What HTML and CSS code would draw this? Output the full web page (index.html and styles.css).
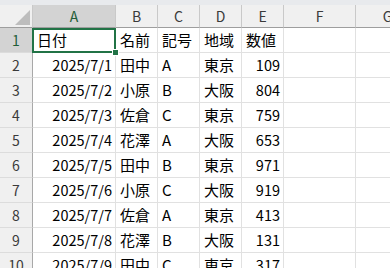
FILE: index.html
```html
<!DOCTYPE html>
<html lang="ja">
<head>
  <meta charset="UTF-8">
  <title>Sheet1</title>
  <link rel="stylesheet" href="styles.css">
</head>
<body>
  <div class="top-strip"></div>
  <div class="sheet">
    <div class="row head-row">
      <div class="corner"><span class="corner-mark"></span></div>
      <div class="col-head selected">A</div>
      <div class="col-head">B</div>
      <div class="col-head">C</div>
      <div class="col-head">D</div>
      <div class="col-head">E</div>
      <div class="col-head">F</div>
      <div class="col-head">G</div>
    </div>

    <div class="row">
      <div class="row-head selected">1</div>
      <div class="cell active">日付<span class="selection"><span class="fill-handle"></span></span></div>
      <div class="cell">名前</div>
      <div class="cell">記号</div>
      <div class="cell">地域</div>
      <div class="cell">数値</div>
      <div class="cell"></div>
      <div class="cell"></div>
    </div>
    <div class="row">
      <div class="row-head">2</div>
      <div class="cell num">2025/7/1</div>
      <div class="cell">田中</div>
      <div class="cell">A</div>
      <div class="cell">東京</div>
      <div class="cell num">109</div>
      <div class="cell"></div>
      <div class="cell"></div>
    </div>
    <div class="row">
      <div class="row-head">3</div>
      <div class="cell num">2025/7/2</div>
      <div class="cell">小原</div>
      <div class="cell">B</div>
      <div class="cell">大阪</div>
      <div class="cell num">804</div>
      <div class="cell"></div>
      <div class="cell"></div>
    </div>
    <div class="row">
      <div class="row-head">4</div>
      <div class="cell num">2025/7/3</div>
      <div class="cell">佐倉</div>
      <div class="cell">C</div>
      <div class="cell">東京</div>
      <div class="cell num">759</div>
      <div class="cell"></div>
      <div class="cell"></div>
    </div>
    <div class="row">
      <div class="row-head">5</div>
      <div class="cell num">2025/7/4</div>
      <div class="cell">花澤</div>
      <div class="cell">A</div>
      <div class="cell">大阪</div>
      <div class="cell num">653</div>
      <div class="cell"></div>
      <div class="cell"></div>
    </div>
    <div class="row">
      <div class="row-head">6</div>
      <div class="cell num">2025/7/5</div>
      <div class="cell">田中</div>
      <div class="cell">B</div>
      <div class="cell">東京</div>
      <div class="cell num">971</div>
      <div class="cell"></div>
      <div class="cell"></div>
    </div>
    <div class="row">
      <div class="row-head">7</div>
      <div class="cell num">2025/7/6</div>
      <div class="cell">小原</div>
      <div class="cell">C</div>
      <div class="cell">大阪</div>
      <div class="cell num">919</div>
      <div class="cell"></div>
      <div class="cell"></div>
    </div>
    <div class="row">
      <div class="row-head">8</div>
      <div class="cell num">2025/7/7</div>
      <div class="cell">佐倉</div>
      <div class="cell">A</div>
      <div class="cell">東京</div>
      <div class="cell num">413</div>
      <div class="cell"></div>
      <div class="cell"></div>
    </div>
    <div class="row">
      <div class="row-head">9</div>
      <div class="cell num">2025/7/8</div>
      <div class="cell">花澤</div>
      <div class="cell">B</div>
      <div class="cell">大阪</div>
      <div class="cell num">131</div>
      <div class="cell"></div>
      <div class="cell"></div>
    </div>
    <div class="row">
      <div class="row-head">10</div>
      <div class="cell num">2025/7/9</div>
      <div class="cell">田中</div>
      <div class="cell">C</div>
      <div class="cell">東京</div>
      <div class="cell num">317</div>
      <div class="cell"></div>
      <div class="cell"></div>
    </div>
  </div>
</body>
</html>
```

FILE: styles.css
```css
body {
  margin: 0;
  background-color: #ffffff;
  font-family: "Noto Sans CJK JP", "Noto Sans", sans-serif;
  overflow: hidden;
}

.top-strip {
  height: 5px;
  background-color: #e8eaed;
}

.sheet {
  width: 420px;
}

.row {
  display: grid;
  grid-template-columns: 33px 83px 42px 42px 42px 42px 72px 64px;
  height: 25px;
}

.row > div {
  box-sizing: border-box;
  border-right: 1px solid #e1e1e1;
  border-bottom: 1px solid #e1e1e1;
}

.head-row {
  height: 23px;
}

.head-row > div {
  background-color: #f0f0f0;
  border-right: 1px solid #c9c9c9;
  border-bottom: 1px solid #9e9e9e;
}

.corner {
  position: relative;
}

.corner-mark {
  position: absolute;
  right: 2px;
  bottom: 2px;
  width: 0;
  height: 0;
  border-left: 15px solid transparent;
  border-bottom: 15px solid #bdbdbd;
}

.col-head {
  font-size: 14px;
  color: #3a3a3a;
  text-align: center;
  line-height: 22px;
}

.row-head {
  font-size: 14px;
  color: #3a3a3a;
  text-align: center;
  line-height: 24px;
  background-color: #f0f0f0;
}

.row > .row-head {
  border-right: 1px solid #a8a8a8;
  border-bottom: 1px solid #dcdcdc;
}

.head-row > .selected,
.row > .row-head.selected {
  background-color: #d3d3d3;
  color: #1f5d37;
}

.cell {
  font-size: 15px;
  color: #000000;
  line-height: 24px;
  padding: 0 4px;
  white-space: nowrap;
  overflow: hidden;
}

.num {
  text-align: right;
  padding-right: 3px;
  font-size: 14.5px;
}

.active {
  position: relative;
  overflow: visible;
}

/* green box round the selected cell */
.selection {
  position: absolute;
  left: -1px;
  top: 0;
  width: 84px;
  height: 25px;
  box-sizing: border-box;
  border: 2px solid #217346;
}

.fill-handle {
  position: absolute;
  right: -5px;
  bottom: -5px;
  width: 5px;
  height: 5px;
  background-color: #217346;
  border: 1px solid #ffffff;
}
```
